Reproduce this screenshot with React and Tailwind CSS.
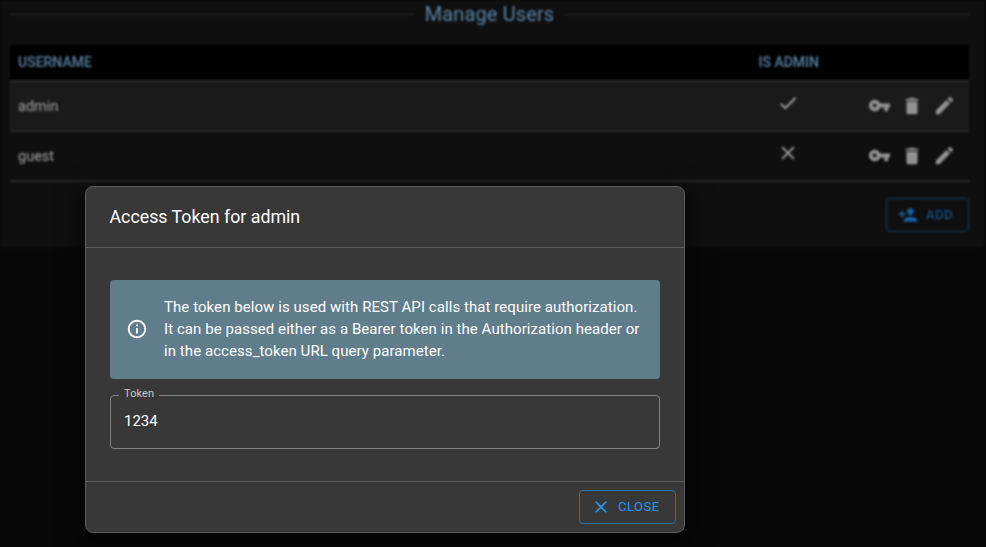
import React from "react";
import { MdCheck, MdClose, MdVpnKey, MdDelete, MdEdit, MdPersonAdd, MdOutlineInfo } from "react-icons/md";

const users = [
  { name: "admin", admin: true },
  { name: "guest", admin: false },
];

function UserRow({ user, striped }) {
  return (
    <div
      className={
        "flex h-[50px] items-center border-b-2 border-[#282828] pl-2 " +
        (striped ? "bg-[#1a1a1a]" : "bg-[#0f0f0f]")
      }
    >
      <div className="flex-1 pt-px text-[14.5px] leading-[22px] text-[#a4a4a4]">{user.name}</div>
      <div className="mr-[69px] mb-[6px] flex w-[22px] justify-center text-[22px] text-[#a0a0a0]">
        {user.admin ? <MdCheck /> : <MdClose />}
      </div>
      <div className="mr-[13px] flex items-center gap-[10px] pb-px text-[#929292]">
        <MdVpnKey size={23} />
        <MdDelete size={22} />
        <MdEdit size={23} />
      </div>
    </div>
  );
}

function Dialog() {
  return (
    <div className="absolute top-[186px] left-[85px] flex h-[347px] w-[600px] flex-col rounded-lg border border-[#5c5c5c] bg-[#383838] shadow-[0_8px_24px_8px_rgba(0,0,0,0.45)]">
      <div className="flex h-[61px] items-center border-b border-[#5c5c5c] pl-[23.5px] text-[17.8px] leading-[26px] text-white">
        Access Token for admin
      </div>
      <div className="flex-1 px-6 pt-8">
        <div className="flex h-[99px] items-center rounded bg-[#607d8b] pb-0.5 pl-4 text-white">
          <MdOutlineInfo size={22} />
          <p className="ml-4 text-[15px] leading-[22px] tracking-[0.065px] whitespace-nowrap">
            The token below is used with REST API calls that require authorization.
            <br />
            It can be passed either as a Bearer token in the Authorization header or
            <br />
            in the access_token URL query parameter.
          </p>
        </div>
        <fieldset className="mt-[7px] h-[63px] rounded border border-[#828282] pl-[8px]">
          <legend className="h-[18px] px-[5px] pb-0.5 text-[11px] leading-4 tracking-[0.1px] text-[#c8c8c8]">Token</legend>
          <div className="mt-[6px] pl-[5px] text-[15px] leading-[22px] text-white">1234</div>
        </fieldset>
      </div>
      <div className="flex h-[51px] items-center justify-end border-t border-[#5c5c5c] pr-2">
        <button className="flex h-[34px] w-[97px] items-center rounded border border-[#2274ae] pl-[11px] text-[#2196f3] shadow-[0_0_0_1px_#40392a]">
          <MdClose size={20} />
          <span className="ml-[7px] text-[13px] tracking-[0.5px]">CLOSE</span>
        </button>
      </div>
    </div>
  );
}

export default function App() {
  return (
    <div className="relative h-[547px] w-[986px] overflow-hidden bg-[#070707] font-[Roboto,sans-serif]">
      <div className="blur-[0.8px]">
        <div className="h-[248px] w-[985px] rounded-br bg-[#0f0f0f] pr-4 pl-[10px]">
          <div className="flex h-[29px] items-center">
            <div className="h-px flex-1 bg-[#2a2a2a]" />
            <h1 className="mx-[10px] text-[20px] leading-[29px] tracking-[0.13px] text-[#5a84a7]">Manage Users</h1>
            <div className="h-px flex-1 bg-[#2a2a2a]" />
          </div>
          <div className="mt-4 flex h-[37px] items-center border-b-2 border-[#2a2a2a] bg-black pl-2 text-[14px] font-medium text-[#5a82a3]">
            <div className="flex-1">USERNAME</div>
            <div className="mr-[150px]">IS ADMIN</div>
          </div>
          {users.map((u, i) => (
            <UserRow key={u.name} user={u} striped={i % 2 === 0} />
          ))}
          <div className="mt-4 flex justify-end">
            <button className="flex h-[34px] w-[83px] items-center rounded border border-[#113c5d] pl-[11px] text-[#1562a2]">
              <MdPersonAdd size={20} />
              <span className="ml-[8px] text-[13px] tracking-[0.5px]">ADD</span>
            </button>
          </div>
        </div>
      </div>
      <Dialog />
    </div>
  );
}
